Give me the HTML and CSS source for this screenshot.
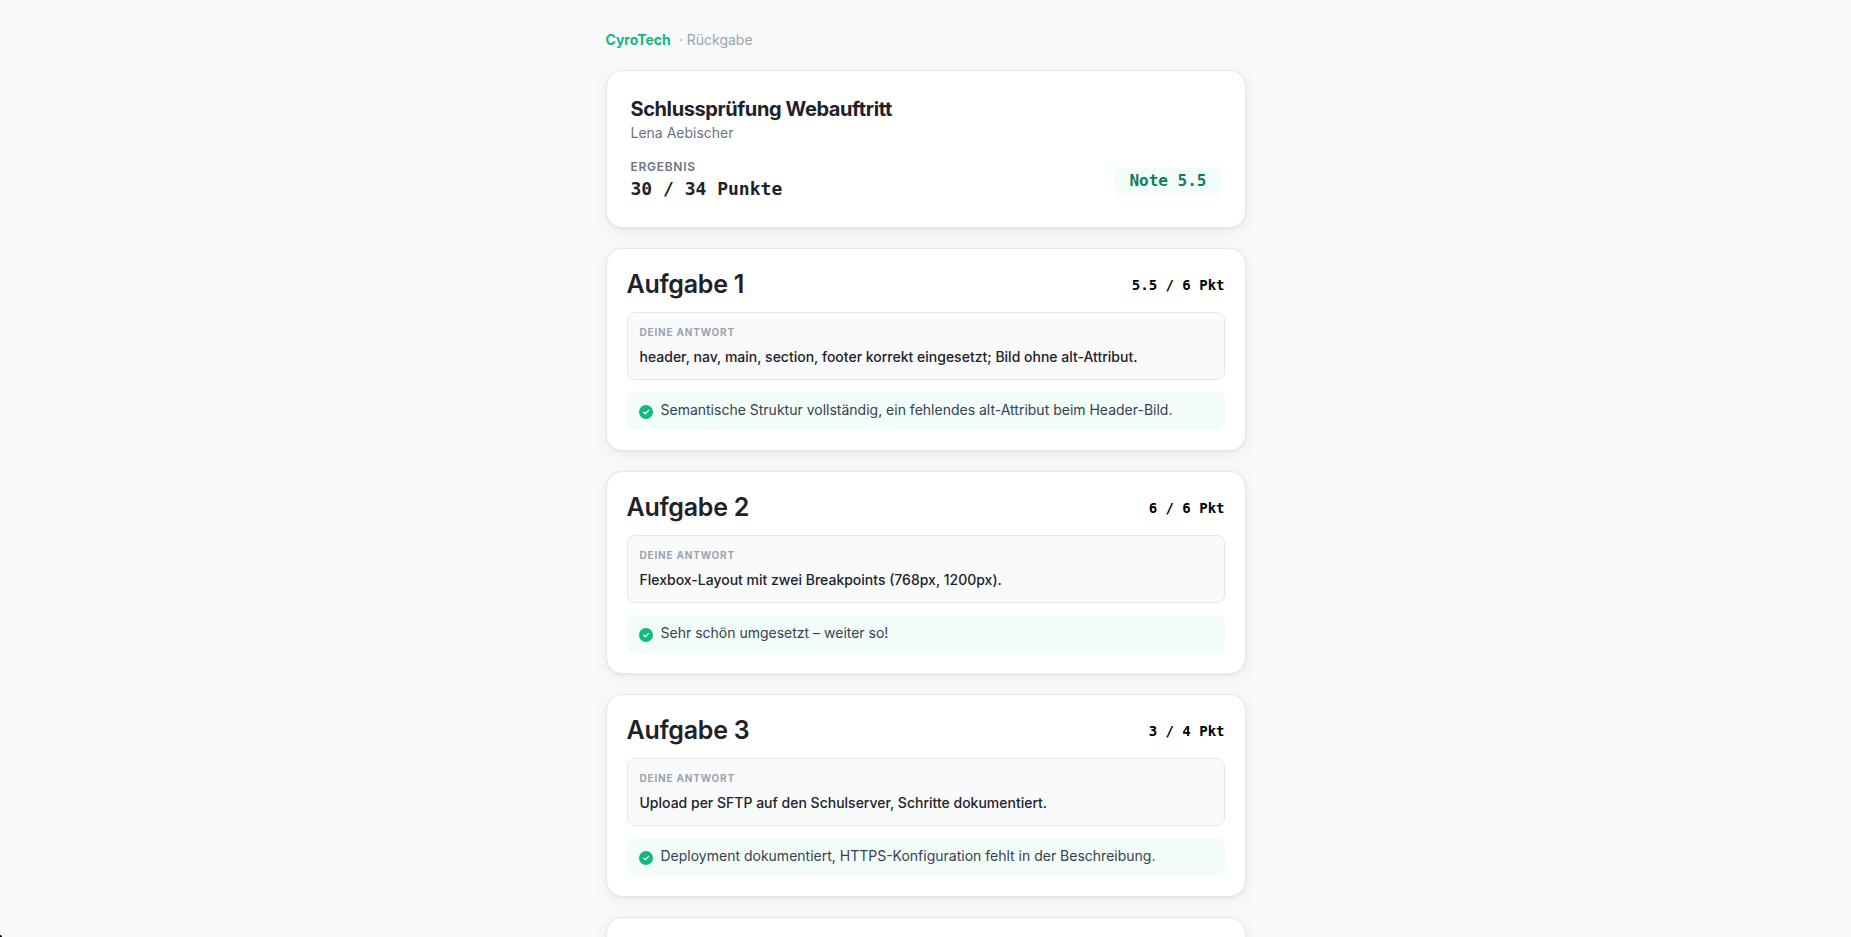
FILE: index.html
```
<!DOCTYPE html>
<html lang="de">
<head>
<meta charset="utf-8">
<meta name="viewport" content="width=device-width, initial-scale=1">
<title>CyroTech · Rückgabe</title>
<link rel="stylesheet" href="styles.css">
</head>
<body>
<svg class="sprite" aria-hidden="true">
  <symbol id="check" viewBox="0 0 14 14">
    <circle cx="7" cy="7" r="7" fill="#10b981"/>
    <path d="M4.6 7.1 6.3 8.7 9.6 5.4" fill="none" stroke="#fff" stroke-width="1.3" stroke-linecap="round" stroke-linejoin="round"/>
  </symbol>
</svg>
<main class="page">
  <header class="brand"><span class="brand-name">CyroTech</span><span class="brand-sub">· Rückgabe</span></header>

  <section class="card summary">
    <h1 class="summary-title">Schlussprüfung Webauftritt</h1>
    <p class="summary-student">Lena Aebischer</p>
    <div class="summary-row">
      <div>
        <p class="summary-label">Ergebnis</p>
        <p class="summary-points">30 / 34 Punkte</p>
      </div>
      <span class="grade">Note 5.5</span>
    </div>
  </section>

  <article class="card task">
    <header class="task-head"><h2 class="task-title">Aufgabe 1</h2><span class="task-points">5.5 / 6 Pkt</span></header>
    <div class="answer">
      <p class="answer-label">Deine Antwort</p>
      <p class="answer-text">header, nav, main, section, footer korrekt eingesetzt; Bild ohne alt-Attribut.</p>
    </div>
    <div class="feedback"><svg class="feedback-icon" aria-hidden="true"><use href="#check"/></svg><p>Semantische Struktur vollständig, ein fehlendes alt-Attribut beim Header-Bild.</p></div>
  </article>

  <article class="card task">
    <header class="task-head"><h2 class="task-title">Aufgabe 2</h2><span class="task-points">6 / 6 Pkt</span></header>
    <div class="answer">
      <p class="answer-label">Deine Antwort</p>
      <p class="answer-text">Flexbox-Layout mit zwei Breakpoints (768px, 1200px).</p>
    </div>
    <div class="feedback"><svg class="feedback-icon" aria-hidden="true"><use href="#check"/></svg><p>Sehr schön umgesetzt – weiter so!</p></div>
  </article>

  <article class="card task">
    <header class="task-head"><h2 class="task-title">Aufgabe 3</h2><span class="task-points">3 / 4 Pkt</span></header>
    <div class="answer">
      <p class="answer-label">Deine Antwort</p>
      <p class="answer-text">Upload per SFTP auf den Schulserver, Schritte dokumentiert.</p>
    </div>
    <div class="feedback"><svg class="feedback-icon" aria-hidden="true"><use href="#check"/></svg><p>Deployment dokumentiert, HTTPS-Konfiguration fehlt in der Beschreibung.</p></div>
  </article>

  <article class="card task task-next"></article>
</main>
<div class="corner"></div>
</body>
</html>
```
FILE: styles.css
```
* { box-sizing: border-box; }
html { scrollbar-width: none; }
body {
  margin: 0;
  background: #f8f9fb;
  color: #1f2129;
  font-family: Inter, "Liberation Sans", sans-serif;
  font-size: 14px;
  line-height: 20px;
}
h1, h2, p { margin: 0; }
.sprite { position: absolute; width: 0; height: 0; }

.page {
  max-width: 640px;
  margin: 0 auto;
  padding: 30px 0;
  display: flex;
  flex-direction: column;
  gap: 20px;
}
.brand { display: flex; gap: 8px; }
.brand-name { color: #10b981; font-weight: 700; }
.brand-sub { color: #9ca3af; }

.card {
  background: #fff;
  border: 1px solid #e5e7eb;
  border-radius: 16px;
  box-shadow: 0 1px 3px rgba(0, 0, 0, 0.06), 0 4px 16px rgba(0, 0, 0, 0.05);
}

.summary { padding: 24px; }
.summary-title { font-size: 20px; line-height: 28px; font-weight: 700; letter-spacing: -0.02em; }
.summary-student { color: #6b7280; }
.summary-row {
  display: flex;
  align-items: center;
  justify-content: space-between;
  margin-top: 16px;
}
.summary-label {
  color: #6b7280;
  font-size: 12px;
  line-height: 16px;
  font-weight: 600;
  letter-spacing: 0.06em;
  text-transform: uppercase;
}
.summary-points, .grade, .task-points {
  font-family: "DejaVu Sans Mono", monospace;
  font-weight: 700;
}
.summary-points { font-size: 18px; line-height: 28px; }
.grade {
  padding: 4px 14px;
  border-radius: 6px;
  background: #f2fcf8;
  color: #0b7f5a;
  font-size: 16px;
}

.task { padding: 20px; display: flex; flex-direction: column; gap: 12px; }
.task-next { min-height: 203px; }
.task-head { display: flex; align-items: center; justify-content: space-between; }
.task-title { font-size: 25px; line-height: 31px; font-weight: 600; letter-spacing: -0.01em; }
.task-points { color: #000; }
.answer {
  padding: 12px;
  display: flex;
  flex-direction: column;
  gap: 8px;
  border: 1px solid #e5e7eb;
  border-radius: 8px;
  background: #f9fafc;
}
.answer-label {
  color: #9ca3af;
  font-size: 10px;
  line-height: 14px;
  font-weight: 700;
  letter-spacing: 0.08em;
  text-transform: uppercase;
}
.answer-text { font-weight: 500; }
.feedback {
  display: flex;
  gap: 8px;
  padding: 8px 12px 10px;
  border-radius: 8px;
  background: #f2fcf8;
  color: #374151;
}
.feedback-icon { width: 14px; height: 14px; margin-top: 5px; flex: none; }

.corner {
  position: fixed;
  left: 0;
  bottom: 0;
  width: 2px;
  height: 2px;
  border-top-right-radius: 2px;
  background: #000;
}
```
